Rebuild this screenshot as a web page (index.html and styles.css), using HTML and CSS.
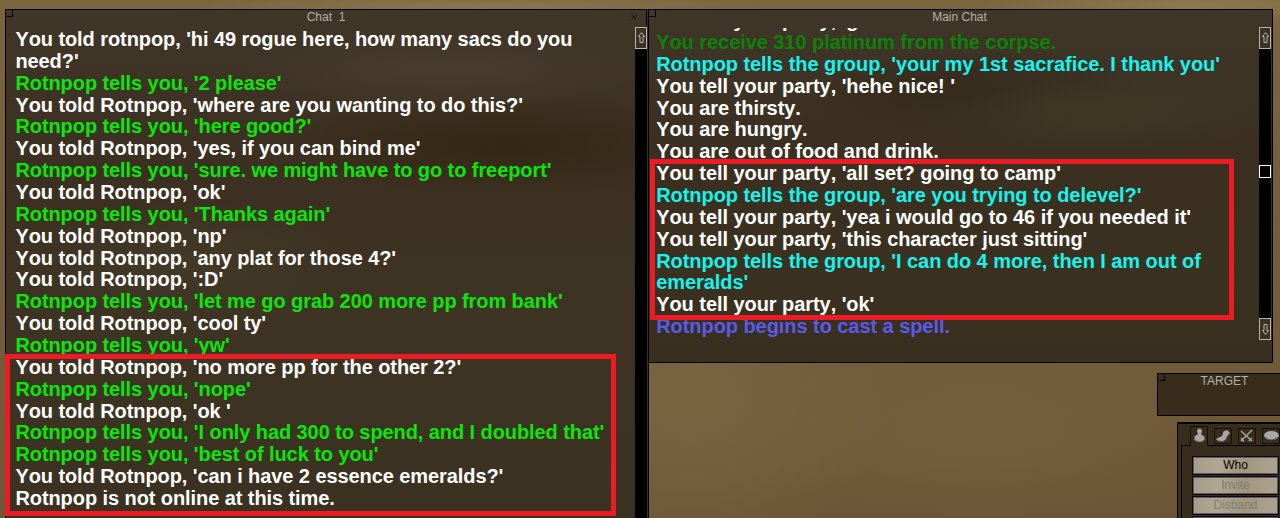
FILE: index.html
```html
<!DOCTYPE html>
<html lang="en">
<head>
    <meta charset="UTF-8">
    <title>Chat</title>
    <link rel="stylesheet" href="styles.css">
</head>
<body>
    <div class="desktop">
        <!-- Chat 1 -->
        <div class="window chat-one">
            <span class="corner"></span>
            <div class="title">Chat&nbsp; 1</div>
            <svg class="close" viewBox="0 0 6 6"><path d="M.5 .5l5 5M5.5 .5l-5 5"/></svg>
            <div class="content">
                <div class="messages">
                    <p>You told rotnpop, 'hi 49 rogue here, how many sacs do you<br>need?'</p>
                    <p class="tell">Rotnpop tells you, '2 please'</p>
                    <p>You told Rotnpop, 'where are you wanting to do this?'</p>
                    <p class="tell">Rotnpop tells you, 'here good?'</p>
                    <p>You told Rotnpop, 'yes, if you can bind me'</p>
                    <p class="tell">Rotnpop tells you, 'sure. we might have to go to freeport'</p>
                    <p>You told Rotnpop, 'ok'</p>
                    <p class="tell">Rotnpop tells you, 'Thanks again'</p>
                    <p>You told Rotnpop, 'np'</p>
                    <p>You told Rotnpop, 'any plat for those 4?'</p>
                    <p>You told Rotnpop, ':D'</p>
                    <p class="tell">Rotnpop tells you, 'let me go grab 200 more pp from bank'</p>
                    <p>You told Rotnpop, 'cool ty'</p>
                    <p class="tell">Rotnpop tells you, 'yw'</p>
                    <p>You told Rotnpop, 'no more pp for the other 2?'</p>
                    <p class="tell">Rotnpop tells you, 'nope'</p>
                    <p>You told Rotnpop, 'ok '</p>
                    <p class="tell">Rotnpop tells you, 'I only had 300 to spend, and I doubled that'</p>
                    <p class="tell">Rotnpop tells you, 'best of luck to you'</p>
                    <p>You told Rotnpop, 'can i have 2 essence emeralds?'</p>
                    <p>Rotnpop is not online at this time.</p>
                </div>
                <div class="scrollbar">
                    <svg class="arrow" viewBox="0 0 12 22"><rect x=".5" y=".5" width="11" height="21"/><path d="M6.5 5.500L9.500 9.500H8v6H5v-6H3.500z"/></svg>
                </div>
            </div>
        </div>

        <!-- Main Chat -->
        <div class="window main-chat">
            <span class="corner"></span>
            <div class="title">Main Chat</div>
            <div class="content">
                <div class="messages">
                    <p>You tell your party, 'g'</p>
                    <p class="loot">You receive 310 platinum from the corpse.</p>
                    <p class="group">Rotnpop tells the group, 'your my 1st sacrafice. I thank you'</p>
                    <p>You tell your party, 'hehe nice! '</p>
                    <p>You are thirsty.</p>
                    <p>You are hungry.</p>
                    <p>You are out of food and drink.</p>
                    <p>You tell your party, 'all set? going to camp'</p>
                    <p class="group">Rotnpop tells the group, 'are you trying to delevel?'</p>
                    <p>You tell your party, 'yea i would go to 46 if you needed it'</p>
                    <p>You tell your party, 'this character just sitting'</p>
                    <p class="group">Rotnpop tells the group, 'I can do 4 more, then I am out of<br>emeralds'</p>
                    <p>You tell your party, 'ok'</p>
                    <p class="spell">Rotnpop begins to cast a spell.</p>
                </div>
                <div class="scrollbar">
                    <svg class="arrow" viewBox="0 0 12 22"><rect x=".5" y=".5" width="11" height="21"/><path d="M6.500 5.500L9.500 9.500H8v6H5v-6H3.500z"/></svg>
                    <span class="thumb"></span>
                    <svg class="arrow" viewBox="0 0 12 22"><rect x=".5" y=".5" width="11" height="21"/><path d="M6.500 16.500L9.500 12.500H8v-6H5v6H3.500z"/></svg>
                </div>
            </div>
        </div>

        <!-- Target -->
        <div class="window target">
            <span class="corner"></span>
            <div class="title">TARGET</div>
        </div>

        <!-- Actions -->
        <div class="window actions">
            <div class="tabs">
                <span class="tab active"><svg viewBox="0 0 18 18"><path class="metal" d="M7 7L6 4.500Q6 1.500 8.500 1.500T11 4.500L10 7l3.500 2.500V13q-1 2-5 2t-5-2V9.500z"/><path class="dark" d="M4 13q2 2 4.500 2t4.500-2M10 7l2.500 2"/></svg></span>
                <span class="tab"><svg viewBox="0 0 18 18"><path class="metal" d="M2 11l6-3 1.500-4.500L13 2l3 3-2.500 3-1.500 4-4 1.500-4-.5z"/><path class="dark" d="M4 13l5 .5 3-2 1.500-4"/></svg></span>
                <span class="tab"><svg viewBox="0 0 18 18"><path class="cross" d="M3 3l11 10M14 2L3 13M3 10l3 3.500M11 13l3-3"/></svg></span>
                <span class="tab"><svg viewBox="0 0 18 18"><ellipse class="metal" cx="9.500" cy="7.500" rx="7.500" ry="4.500"/><path class="dark" d="M2.500 9q6 6 14 0"/></svg></span>
            </div>
            <div class="panel">
                <button>Who</button>
                <button disabled>Invite</button>
                <button disabled>Disband</button>
                <button></button>
            </div>
        </div>

        <div class="highlight highlight-left"></div>
        <div class="highlight highlight-right"></div>
    </div>
</body>
</html>
```
FILE: styles.css
```css
body {
    margin: 0;
    overflow: hidden;
    font-family: "Liberation Sans", Arial, sans-serif;
}

.desktop {
    position: relative;
    width: 1280px;
    height: 518px;
    overflow: hidden;
    background:
        radial-gradient(ellipse 220px 20px at 1190px 6px, #8d7a4e, transparent),
        radial-gradient(ellipse 300px 14px at 480px 7px, #8b7850, transparent),
        radial-gradient(ellipse 200px 160px at 690px 400px, #7a6440, transparent),
        radial-gradient(ellipse 240px 90px at 980px 430px, #745e3d, transparent),
        linear-gradient(#79663f, #715b39 70%, #6c5637);
}

.window {
    position: absolute;
    box-sizing: border-box;
    border: 1px solid #000;
    display: flex;
    flex-direction: column;
}

.chat-one {
    left: 5px;
    top: 9px;
    width: 642px;
    height: 520px;
    box-shadow: 1px 0 #3a2f20, 2px 0 #000;
    background:
        radial-gradient(ellipse 200px 40px at 440px 60px, #483d2d, transparent),
        radial-gradient(ellipse 230px 50px at 500px 135px, #332814, transparent),
        radial-gradient(ellipse 160px 60px at 180px 250px, #433927, transparent),
        linear-gradient(#403628, #3b3021 30%, #3e3423 60%, #3b3120);
}

.main-chat {
    left: 648px;
    top: 9px;
    width: 625px;
    height: 354px;
    background:
        radial-gradient(ellipse 200px 45px at 440px 100px, #3f3724, transparent),
        radial-gradient(ellipse 180px 45px at 330px 85px, #32271a, transparent),
        linear-gradient(#403627, #3a2f20 40%, #3b3120 70%, #392f1e);
}

.target {
    left: 1157px;
    top: 373px;
    width: 135px;
    height: 43px;
    background: #382d1a;
}

.actions {
    left: 1177px;
    top: 422px;
    width: 120px;
    height: 110px;
    background: #382d1c;
    border-top-width: 2px;
}

.corner {
    position: absolute;
    left: 0;
    top: 0;
    width: 6px;
    height: 6px;
    border-right: 1px solid #000;
    border-bottom: 1px solid #000;
}

.title {
    height: 17px;
    line-height: 15px;
    font-size: 12px;
    text-align: center;
    color: #b5b0a8;
}

.main-chat .title {
    padding-right: 2px;
}

.close {
    position: absolute;
    right: 9px;
    top: 4px;
    width: 6px;
    height: 6px;
    fill: none;
    stroke: #17120b;
}

.content {
    flex: 1;
    min-height: 0;
    display: flex;
    justify-content: space-between;
}

.chat-one .content {
    margin-right: -1px;
}

.messages {
    display: flex;
    flex-direction: column;
    padding: 2px 0 0 9.4px;
    overflow: hidden;
    white-space: pre;
    font-size: 20px;
    font-weight: bold;
    font-kerning: none;
    letter-spacing: -0.08px;
    line-height: 21.86px;
    color: #fff;
}

.main-chat .messages {
    justify-content: flex-end;
    margin-top: 1px;
    padding: 0 0 24px 7.2px;
    letter-spacing: -0.06px;
}

.messages p {
    margin: 0;
}

.messages .tell {
    color: #0be60b;
}

.messages .loot {
    color: #0c820c;
}

.messages .group {
    color: #17f3ee;
}

.messages .spell {
    color: #5a5aeb;
}

.scrollbar {
    display: flex;
    flex-direction: column;
    align-items: center;
    width: 12px;
    background: #000;
}

.main-chat .scrollbar {
    margin: 0 1px 22px 0;
}

.arrow {
    width: 12px;
    height: 22px;
    background: #3c3225;
    fill: none;
    stroke: #b9b4a6;
}

.thumb {
    box-sizing: border-box;
    width: 12px;
    height: 13px;
    margin: 116px 0 auto;
    border: 1px solid #fff;
}

.tabs {
    display: flex;
    gap: 6px;
    padding: 2px 0 0 12px;
}

.tab {
    box-sizing: border-box;
    width: 18px;
    height: 16px;
    margin-top: 2px;
    border: 1px solid #15100a;
}

.tab.active {
    position: relative;
    height: 20px;
    margin: 0 0 -1px;
    border-bottom: 0;
    background: #382d1c;
}

.tab svg {
    display: block;
    width: 18px;
    height: 18px;
    margin: -1px;
    overflow: visible;
}

.tab.active svg {
    margin: 0;
}

.metal {
    fill: #a8a8a8;
}

.dark {
    fill: none;
    stroke: #555;
}

.cross {
    fill: none;
    stroke: #aaa;
    stroke-width: 1.3;
}

.panel {
    flex: 1;
    display: flex;
    flex-direction: column;
    gap: 1px;
    padding: 10px 0 0 10px;
    margin-left: 3px;
    border: 1px solid #000;
}

.panel button {
    box-sizing: border-box;
    width: 87px;
    height: 19px;
    padding: 0 0 2px;
    border: 1px solid #555365;
    outline: 1px solid #0c0906;
    outline-offset: -1px;
    box-shadow: inset 0 0 0 1px #5c5a6c;
    background: linear-gradient(100deg, #a59c88, #b0a793 30%, #a1977f 60%, #ada490);
    font: 12px "Liberation Sans", Arial, sans-serif;
    color: #000;
}

.panel button:disabled {
    color: #827c71;
}

/* red boxes around the trade talk */
.highlight {
    position: absolute;
    box-sizing: border-box;
    border: 5px solid #ed1c24;
}

.highlight-left {
    left: 5px;
    top: 354px;
    width: 611px;
    height: 162px;
}

.highlight-right {
    left: 650px;
    top: 159px;
    width: 584px;
    height: 161px;
}
```
